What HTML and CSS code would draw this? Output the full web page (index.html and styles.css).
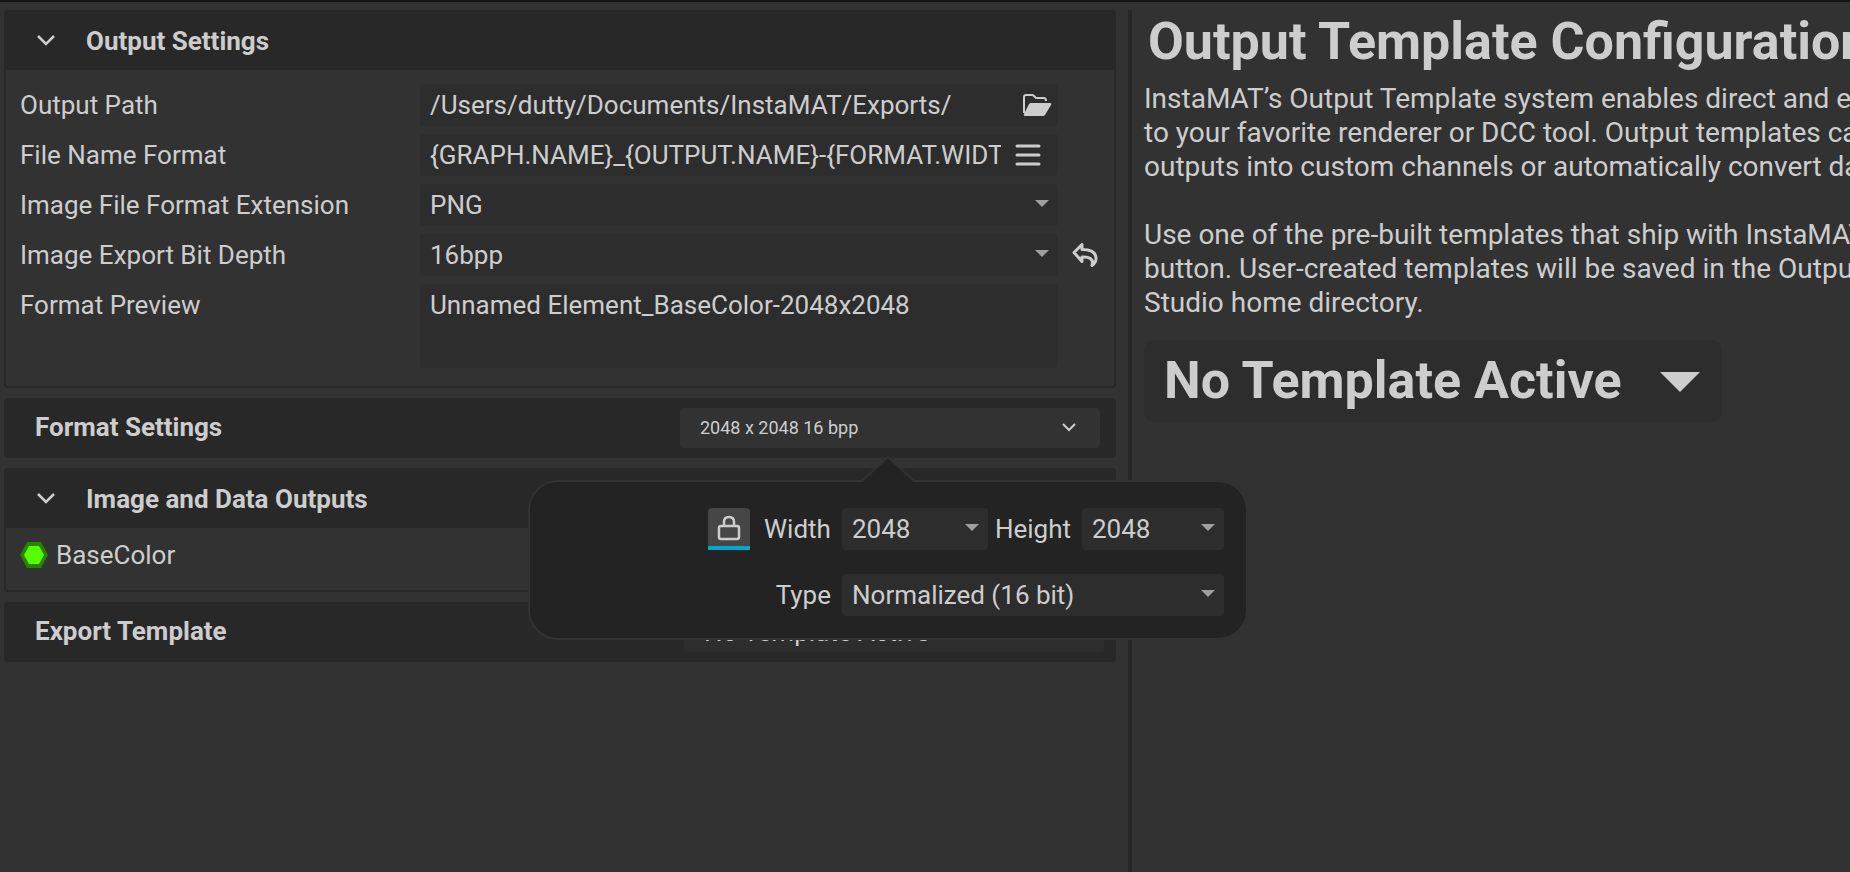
FILE: index.html
```html
<!DOCTYPE html>
<html lang="en">
<head>
    <meta charset="UTF-8">
    <meta name="viewport" content="width=device-width, initial-scale=1.0">
    <title>Output Settings</title>
    <link rel="stylesheet" href="styles.css">
</head>
<body>
    <div class="layout">
        <main class="settings">
            <section class="panel">
                <button type="button" class="panel-header">
                    <svg class="chevron" viewBox="0 0 18 12"><path d="M1 1l8 8 8-8"/></svg>
                    <span class="panel-title">Output Settings</span>
                </button>
                <div class="panel-body output-body">
                    <div class="form-row">
                        <label for="outputPath">Output Path</label>
                        <div class="field">
                            <input type="text" id="outputPath" value="/Users/dutty/Documents/InstaMAT/Exports/">
                            <button type="button" class="icon-button folder-button" aria-label="Browse">
                                <svg class="folder-icon" viewBox="0 0 30 24">
                                    <path class="line" d="M2 20V4q0-2 2-2h6q1 0 2 1l2 2h8q2 0 2 3"/>
                                    <path class="solid" d="M9 10h19q2 0 1 2l-6 10q-1 1-2 1H4q-3 0-2-2L7 11q1-1 2-1z"/>
                                </svg>
                            </button>
                        </div>
                    </div>
                    <div class="form-row">
                        <label for="fileName">File Name Format</label>
                        <div class="field">
                            <input type="text" id="fileName" value="{GRAPH.NAME}_{OUTPUT.NAME}-{FORMAT.WIDTH}x{FORMAT.HEIGHT}">
                            <button type="button" class="icon-button menu-button" aria-label="Insert variable">
                                <svg class="menu-icon" viewBox="0 0 26 22"><path d="M2 2h22M2 11h22M2 20h22"/></svg>
                            </button>
                        </div>
                    </div>
                    <div class="form-row">
                        <label for="extension">Image File Format Extension</label>
                        <div class="select">
                            <select id="extension"><option>PNG</option></select>
                        </div>
                    </div>
                    <div class="form-row">
                        <label for="bitDepth">Image Export Bit Depth</label>
                        <div class="select">
                            <select id="bitDepth"><option>16bpp</option></select>
                        </div>
                        <button type="button" class="icon-button reset-button" aria-label="Reset">
                            <svg class="reset-icon" viewBox="0 0 26 24"><path d="M2 9.500L10 1.500v5c9 0 14 3 14 9 0 3-1 5-4 7 2-7-3-9-10-8.500v4.500z"/></svg>
                        </button>
                    </div>
                    <div class="form-row">
                        <label for="preview">Format Preview</label>
                        <textarea id="preview" readonly>Unnamed Element_BaseColor-2048x2048</textarea>
                    </div>
                </div>
            </section>

            <section class="panel panel-bar">
                <h2 class="panel-title">Format Settings</h2>
                <div class="bar-control">
                    <button type="button" class="format-button">
                        <span>2048 x 2048 16 bpp</span>
                        <svg class="chevron-small" viewBox="0 0 14 10"><path d="M1 1l6 6 6-6"/></svg>
                    </button>
                    <div class="popover">
                        <svg class="popover-arrow" viewBox="0 0 52 26"><path d="M1 24L26 1l25 23v2H1z"/><path class="edge" d="M0 25L26 1l26 24"/></svg>
                        <div class="popover-row">
                            <button type="button" class="lock-button" aria-label="Lock aspect ratio">
                                <svg class="lock-icon" viewBox="0 0 24 26">
                                    <rect x="2" y="11" width="20" height="13" rx="2"/>
                                    <path d="M7 11V7q0-5 5-5t5 5v4"/>
                                </svg>
                            </button>
                            <label for="width">Width</label>
                            <div class="select width-select">
                                <select id="width"><option>2048</option></select>
                            </div>
                            <label for="height">Height</label>
                            <div class="select height-select">
                                <select id="height"><option>2048</option></select>
                            </div>
                        </div>
                        <div class="popover-row">
                            <label for="type">Type</label>
                            <div class="select type-select">
                                <select id="type"><option>Normalized (16 bit)</option></select>
                            </div>
                        </div>
                    </div>
                </div>
            </section>

            <section class="panel">
                <button type="button" class="panel-header">
                    <svg class="chevron" viewBox="0 0 18 12"><path d="M1 1l8 8 8-8"/></svg>
                    <span class="panel-title">Image and Data Outputs</span>
                </button>
                <div class="panel-body outputs-body">
                    <svg class="output-icon" viewBox="0 0 28 26">
                        <path class="outer" d="M7 0h14l7 13-7 13H7L0 13z"/>
                        <path class="inner" d="M9 4h10l5 9-5 9H9l-5-9z"/>
                    </svg>
                    <span>BaseColor</span>
                </div>
            </section>

            <section class="panel panel-bar export-bar">
                <h2 class="panel-title">Export Template</h2>
                <div class="bar-control">
                    <button type="button" class="template-button">No Template Active</button>
                </div>
            </section>
        </main>

        <aside class="info">
            <h1>Output Template Configuration</h1>
            <p>InstaMAT’s Output Template system enables direct and easy<br>
            to your favorite renderer or DCC tool. Output templates can<br>
            outputs into custom channels or automatically convert data</p>
            <p>Use one of the pre-built templates that ship with InstaMAT<br>
            button. User-created templates will be saved in the Output<br>
            Studio home directory.</p>
            <div class="select template-select">
                <select aria-label="Template"><option>No Template Active</option></select>
            </div>
        </aside>
    </div>
</body>
</html>
```

FILE: styles.css
```css
* {
    box-sizing: border-box;
}

body {
    margin: 0;
    background-color: #323232;
    color: #cdcdcd;
    font-family: Roboto, sans-serif;
    font-size: 26px;
    line-height: 34px;
    overflow: hidden;
}

button,
input,
select,
textarea {
    font: inherit;
    color: inherit;
    border: none;
    margin: 0;
    padding: 0;
    background: none;
    outline: none;
}

svg {
    display: block;
    flex: none;
    fill: none;
    stroke: #cdcdcd;
    stroke-width: 2;
}

.layout {
    display: grid;
    grid-template-columns: minmax(0, 1fr) 722px;
    min-height: 100vh;
    padding-top: 8px;
    border-top: 2px solid #151515;
}

/* Left column */
.settings {
    display: flex;
    flex-direction: column;
    gap: 10px;
    padding: 0 12px 0 4px;
}

.panel {
    border-radius: 4px;
    background-color: #282828;
}

.panel-header {
    display: flex;
    align-items: center;
    gap: 31px;
    width: 100%;
    height: 60px;
    padding: 2px 33px 0;
    text-align: left;
}

.chevron {
    width: 18px;
    height: 12px;
    stroke-width: 2.5;
}

.panel-title {
    margin: 0;
    font-size: 26px;
    font-weight: 700;
}

.panel-body {
    border: 2px solid #282828;
    border-top: none;
    border-radius: 0 0 4px 4px;
    background-color: #323232;
}

.output-body {
    display: flex;
    flex-direction: column;
    gap: 8px;
    padding: 14px 14px 18px;
}

.form-row {
    display: grid;
    grid-template-columns: 400px minmax(0, 1fr) 28px;
}

.form-row label {
    padding: 4px 0;
}

.field,
.select,
textarea {
    border-radius: 4px;
    background-color: #2d2d2d;
}

.form-row .field,
.form-row .select,
.form-row textarea {
    margin-right: 14px;
}

.field {
    display: flex;
    align-items: center;
    height: 42px;
    padding-left: 10px;
}

.field input {
    flex: 1;
    min-width: 0;
    height: 42px;
}

.icon-button {
    display: flex;
    align-items: center;
}

.folder-button {
    padding: 0 6px;
}

.folder-icon {
    width: 30px;
    height: 24px;
}

.folder-icon .solid {
    fill: #cdcdcd;
    stroke: none;
}

.menu-button {
    padding: 0 17px 0 14px;
}

.menu-icon {
    width: 26px;
    height: 22px;
    stroke-width: 3;
    stroke-linecap: round;
}

.reset-icon {
    width: 26px;
    height: 24px;
    stroke-linejoin: round;
    stroke-width: 3;
}

.select {
    position: relative;
}

.select select {
    display: block;
    width: 100%;
    height: 42px;
    padding-left: 10px;
    appearance: none;
}

.select::after {
    content: "";
    position: absolute;
    top: 16px;
    right: 9px;
    border: 7px solid transparent;
    border-top-color: #9f9f9f;
    border-bottom: none;
    pointer-events: none;
}

textarea {
    display: block;
    height: 84px;
    padding: 4px 10px;
    resize: none;
}

.panel-bar {
    display: flex;
    align-items: center;
    justify-content: space-between;
    height: 60px;
    padding: 0 16px 0 31px;
}

.panel-bar .panel-title {
    padding-bottom: 2px;
}

.export-bar {
    padding-right: 12px;
}

.bar-control {
    position: relative;
    width: 420px;
}

.format-button,
.template-button {
    display: flex;
    align-items: center;
    justify-content: space-between;
    width: 100%;
    height: 40px;
    padding: 0 24px 0 20px;
    border-radius: 4px;
    background-color: #323232;
}

.format-button {
    font-size: 18px;
}

.template-button {
    background-color: #2d2d2d;
}

.chevron-small {
    width: 14px;
    height: 10px;
}

.outputs-body {
    display: flex;
    align-items: flex-start;
    gap: 8px;
    padding: 10px 14px 18px;
}

.output-icon {
    width: 28px;
    height: 26px;
    margin-top: 4px;
    stroke: none;
}

.output-icon .outer {
    fill: #2b8200;
}

.output-icon .inner {
    fill: #55ff00;
}

/* Format popover */
.popover {
    position: absolute;
    z-index: 1;
    top: 72px;
    right: -148px;
    display: flex;
    flex-direction: column;
    gap: 24px;
    width: 720px;
    padding: 26px 22px 22px;
    border: 2px solid #323232;
    border-radius: 30px;
    background-color: #232323;
}

.popover-arrow {
    position: absolute;
    top: -26px;
    left: calc(50% - 26px);
    width: 52px;
    height: 26px;
}

.popover-arrow path {
    fill: #232323;
    stroke: none;
}

.popover-arrow .edge {
    fill: none;
    stroke: #323232;
}

.popover-row {
    display: flex;
    align-items: center;
    justify-content: flex-end;
}

.popover-row label {
    margin-right: 11px;
}

.lock-button {
    display: flex;
    justify-content: center;
    width: 42px;
    height: 42px;
    margin-right: 14px;
    padding-top: 7px;
    border-bottom: 4px solid #00a9cb;
    border-radius: 4px 4px 0 0;
    background-color: #464646;
}

.lock-icon {
    width: 24px;
    height: 26px;
    stroke-width: 2.5;
}

.width-select {
    width: 146px;
    margin-right: 7px;
}

.height-select {
    width: 142px;
}

.type-select {
    width: 382px;
}

/* Right column */
.info {
    min-width: 0;
    padding-left: 12px;
    border-left: 4px solid #262626;
    font-size: 28px;
    white-space: nowrap;
    overflow: hidden;
}

.info h1 {
    margin: 0 0 8px;
    padding-left: 4px;
    font-size: 52px;
    font-weight: 700;
    line-height: 64px;
}

.info p {
    margin: 0 0 34px;
}

.info p + p {
    margin-bottom: 20px;
}

.info .template-select {
    width: 578px;
    border-radius: 10px;
}

.template-select select {
    height: 82px;
    padding-left: 20px;
    font-size: 52px;
    font-weight: 700;
    line-height: 72px;
}

.template-select::after {
    top: 32px;
    right: 22px;
    border-width: 20px;
    border-top-color: #cdcdcd;
}
```
